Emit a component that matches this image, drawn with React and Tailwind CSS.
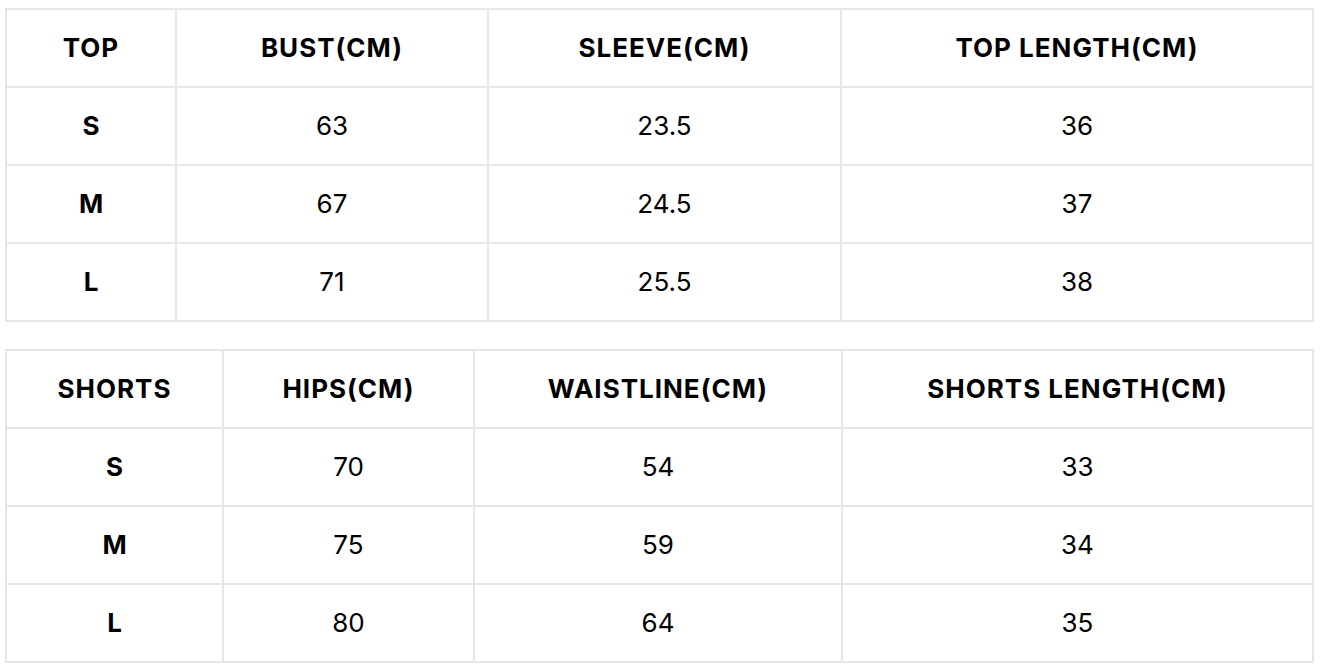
import React from 'react';

const top = {
  head: ['TOP', 'BUST(CM)', 'SLEEVE(CM)', 'TOP LENGTH(CM)'],
  widths: ['170px', '312px', '353px', '472px'],
  rows: [
    ['S', '63', '23.5', '36'],
    ['M', '67', '24.5', '37'],
    ['L', '71', '25.5', '38'],
  ],
};

const shorts = {
  head: ['SHORTS', 'HIPS(CM)', 'WAISTLINE(CM)', 'SHORTS LENGTH(CM)'],
  widths: ['217px', '251px', '368px', '471px'],
  rows: [
    ['S', '70', '54', '33'],
    ['M', '75', '59', '34'],
    ['L', '80', '64', '35'],
  ],
};

function SizeTable({ data }){
  return (
    <table className="w-[1309px] table-fixed border-collapse border-2 border-[#e6e6e6] text-center text-black">
      <colgroup>
        {data.widths.map((w, i) => <col key={i} style={{ width: w }} />)}
      </colgroup>
      <thead>
        <tr className="h-[78px]">
          {data.head.map((h) => (
            <th key={h} className="border-2 border-[#e6e6e6] p-0 pb-[2px] text-[26px] font-bold tracking-[1px]">{h}</th>
          ))}
        </tr>
      </thead>
      <tbody>
        {data.rows.map((r) => (
          <tr key={r[0]} className="h-[78px]">
            {r.map((c, i) => (
              <td key={i} className={`border-2 border-[#e6e6e6] p-0 pb-[2px] text-[26px] ${i === 0 ? 'font-bold' : 'font-normal'}`}>{c}</td>
            ))}
          </tr>
        ))}
      </tbody>
    </table>
  );
}

export default function App(){
  return (
    <div className="w-[1321px] h-[670px] bg-white pl-[5px] pt-[8px] flex flex-col gap-[27px] font-['Inter',sans-serif] overflow-hidden">
      <SizeTable data={top} />
      <SizeTable data={shorts} />
    </div>
  );
}
